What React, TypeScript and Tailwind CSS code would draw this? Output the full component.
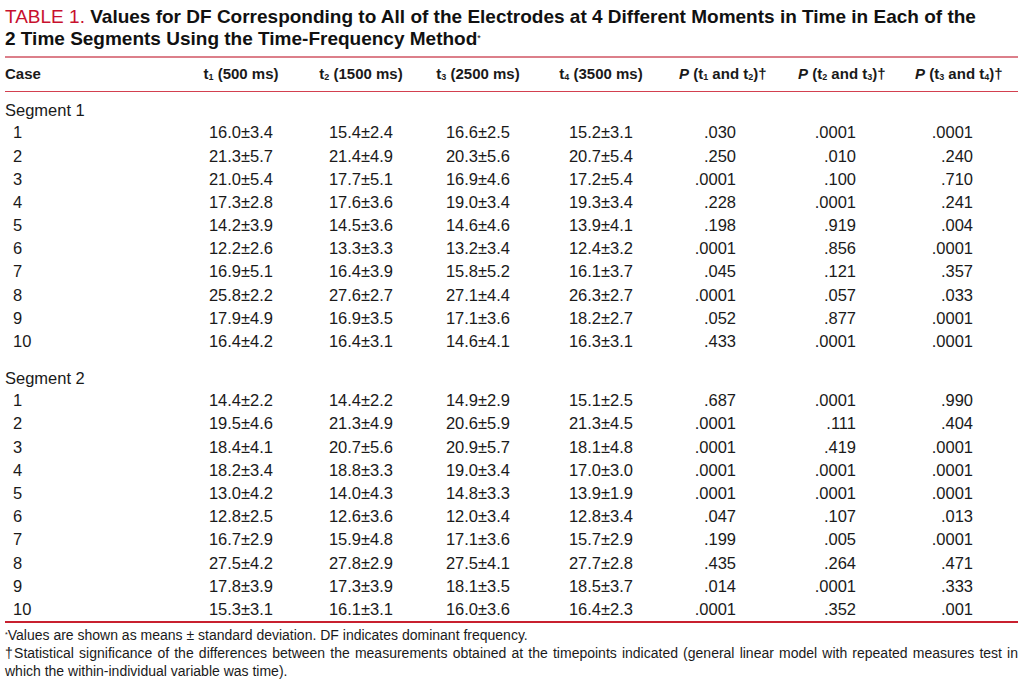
import React from 'react';

type Row = [string, string, string, string, string, string, string, string];

const seg1: Row[] = [
  ['1', '16.0±3.4', '15.4±2.4', '16.6±2.5', '15.2±3.1', '.030', '.0001', '.0001'],
  ['2', '21.3±5.7', '21.4±4.9', '20.3±5.6', '20.7±5.4', '.250', '.010', '.240'],
  ['3', '21.0±5.4', '17.7±5.1', '16.9±4.6', '17.2±5.4', '.0001', '.100', '.710'],
  ['4', '17.3±2.8', '17.6±3.6', '19.0±3.4', '19.3±3.4', '.228', '.0001', '.241'],
  ['5', '14.2±3.9', '14.5±3.6', '14.6±4.6', '13.9±4.1', '.198', '.919', '.004'],
  ['6', '12.2±2.6', '13.3±3.3', '13.2±3.4', '12.4±3.2', '.0001', '.856', '.0001'],
  ['7', '16.9±5.1', '16.4±3.9', '15.8±5.2', '16.1±3.7', '.045', '.121', '.357'],
  ['8', '25.8±2.2', '27.6±2.7', '27.1±4.4', '26.3±2.7', '.0001', '.057', '.033'],
  ['9', '17.9±4.9', '16.9±3.5', '17.1±3.6', '18.2±2.7', '.052', '.877', '.0001'],
  ['10', '16.4±4.2', '16.4±3.1', '14.6±4.1', '16.3±3.1', '.433', '.0001', '.0001'],
];

const seg2: Row[] = [
  ['1', '14.4±2.2', '14.4±2.2', '14.9±2.9', '15.1±2.5', '.687', '.0001', '.990'],
  ['2', '19.5±4.6', '21.3±4.9', '20.6±5.9', '21.3±4.5', '.0001', '.111', '.404'],
  ['3', '18.4±4.1', '20.7±5.6', '20.9±5.7', '18.1±4.8', '.0001', '.419', '.0001'],
  ['4', '18.2±3.4', '18.8±3.3', '19.0±3.4', '17.0±3.0', '.0001', '.0001', '.0001'],
  ['5', '13.0±4.2', '14.0±4.3', '14.8±3.3', '13.9±1.9', '.0001', '.0001', '.0001'],
  ['6', '12.8±2.5', '12.6±3.6', '12.0±3.4', '12.8±3.4', '.047', '.107', '.013'],
  ['7', '16.7±2.9', '15.9±4.8', '17.1±3.6', '15.7±2.9', '.199', '.005', '.0001'],
  ['8', '27.5±4.2', '27.8±2.9', '27.5±4.1', '27.7±2.8', '.435', '.264', '.471'],
  ['9', '17.8±3.9', '17.3±3.9', '18.1±3.5', '18.5±3.7', '.014', '.0001', '.333'],
  ['10', '15.3±3.1', '16.1±3.1', '16.0±3.6', '16.4±2.3', '.0001', '.352', '.001'],
];

const grid = 'grid grid-cols-[175px_122px_118px_116px_130px_120px_120px_112px]';
const narrow = { fontFamily: '"Liberation Sans Narrow", "Liberation Sans", Arial, sans-serif' };

const Sub = ({ n }: { n: string }) => (
  <sub className="text-[9px] relative top-[1px] align-baseline">{n}</sub>
);

const DataRow = ({ r }: { r: Row }) => (
  <div className={`${grid} h-[23.2px] items-center text-[16.5px] leading-none`}>
    <span className="pl-[8px]">{r[0]}</span>
    <span className="text-center">{r[1]}</span>
    <span className="text-center">{r[2]}</span>
    <span className="text-center">{r[3]}</span>
    <span className="text-center">{r[4]}</span>
    <span className="text-right pr-[50px]">{r[5]}</span>
    <span className="text-right pr-[50px]">{r[6]}</span>
    <span className="text-right pr-[45px]">{r[7]}</span>
  </div>
);

export default function App() {
  return (
    <div className="w-[1024px] h-[684px] bg-white px-[5px] pt-[6px] text-[#1a1a1a] overflow-hidden">
      <h1
        className="w-[975px] text-[19px] leading-[21.5px] font-bold text-[#111]"
        style={{ fontFamily: '"Liberation Sans", Arial, sans-serif' }}
      >
        <span className="font-normal text-[#c8102e]">TABLE 1.</span> Values for DF Corresponding to All of the
        Electrodes at 4 Different Moments in Time in Each of the 2 Time Segments Using the Time-Frequency Method
        <span className="text-[9px] font-normal align-top">*</span>
      </h1>

      <div style={narrow} className="mt-[7px] w-[1013px]">
        <div className={`${grid} h-[36px] items-center border-t-2 border-b border-t-[#dc7f8a] border-b-[#d3404f] text-[15px] font-bold`}>
          <span>Case</span>
          <span className="text-center">t<Sub n="1" /> (500 ms)</span>
          <span className="text-center">t<Sub n="2" /> (1500 ms)</span>
          <span className="text-center">t<Sub n="3" /> (2500 ms)</span>
          <span className="text-center">t<Sub n="4" /> (3500 ms)</span>
          <span className="pl-[13px] whitespace-nowrap">
            <i>P</i> (t<Sub n="1" /> and t<Sub n="2" />)†
          </span>
          <span className="pl-[12px] whitespace-nowrap">
            <i>P</i> (t<Sub n="2" /> and t<Sub n="3" />)†
          </span>
          <span className="pl-[9px] whitespace-nowrap">
            <i>P</i> (t<Sub n="3" /> and t<Sub n="4" />)†
          </span>
        </div>

        <div className="pt-[8px] border-b-2 border-[#c8202f]">
          <div className="h-[21px] flex items-center text-[16.5px] leading-none">Segment 1</div>
          {seg1.map((r) => (
            <DataRow key={'a' + r[0]} r={r} />
          ))}
          <div className="mt-[15px] h-[21px] flex items-center text-[16.5px] leading-none">Segment 2</div>
          {seg2.map((r) => (
            <DataRow key={'b' + r[0]} r={r} />
          ))}
        </div>

        <div className="mt-[3px] text-[14px] leading-[18px]">
          <p>
            <span className="text-[7px] align-top">*</span>Values are shown as means ± standard deviation. DF indicates
            dominant frequency.
          </p>
          <p className="text-justify">
            †Statistical significance of the differences between the measurements obtained at the timepoints indicated
            (general linear model with repeated measures test in which the within-individual variable was time).
          </p>
        </div>
      </div>
    </div>
  );
}
